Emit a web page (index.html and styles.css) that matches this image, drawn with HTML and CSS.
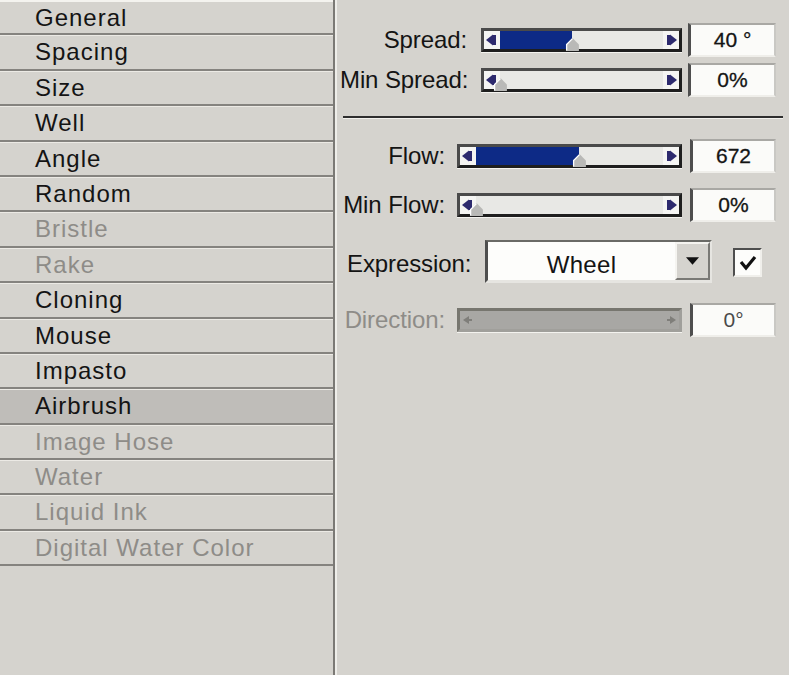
FILE: index.html
```html
<!DOCTYPE html>
<html lang="en">
<head>
    <meta charset="UTF-8">
    <title>Airbrush Settings</title>
    <link rel="stylesheet" href="styles.css">
</head>
<body>
    <div class="window">
        <ul class="categories">
            <li class="cat is-first">General</li>
            <li class="cat">Spacing</li>
            <li class="cat">Size</li>
            <li class="cat">Well</li>
            <li class="cat">Angle</li>
            <li class="cat">Random</li>
            <li class="cat is-disabled">Bristle</li>
            <li class="cat is-disabled">Rake</li>
            <li class="cat">Cloning</li>
            <li class="cat">Mouse</li>
            <li class="cat">Impasto</li>
            <li class="cat is-active">Airbrush</li>
            <li class="cat is-disabled">Image Hose</li>
            <li class="cat is-disabled">Water</li>
            <li class="cat is-disabled">Liquid Ink</li>
            <li class="cat is-disabled">Digital Water Color</li>
        </ul>

        <div class="panel">
            <!-- Spread -->
            <div class="group group-spread">
                <div class="row">
                    <span class="lbl">Spread:</span>
                    <div class="slider" style="--pos: 44%">
                        <span class="end"><svg viewBox="0 0 16 18"><path d="M2 9 L9 3.5 V14.5 Z"/><rect x="9" y="4" width="3" height="10"/></svg></span>
                        <span class="track"><span class="fill"></span><svg class="thumb" viewBox="0 0 14 14"><path d="M1 13 V7 L7 1 L13 7 V13 Z"/><path class="thumb-hi" d="M1.5 12.5 V7 L7 1.5"/></svg></span>
                        <span class="end"><svg viewBox="0 0 16 18"><rect x="4" y="4" width="3" height="10"/><path d="M7 3.5 L14 9 L7 14.5 Z"/></svg></span>
                    </div>
                    <div class="value">40 °</div>
                </div>
                <div class="row">
                    <span class="lbl">Min Spread:</span>
                    <div class="slider" style="--pos: 0%">
                        <span class="end"><svg viewBox="0 0 16 18"><path d="M2 9 L9 3.5 V14.5 Z"/><rect x="9" y="4" width="3" height="10"/></svg></span>
                        <span class="track"><span class="fill"></span><svg class="thumb" viewBox="0 0 14 14"><path d="M1 13 V7 L7 1 L13 7 V13 Z"/><path class="thumb-hi" d="M1.5 12.5 V7 L7 1.5"/></svg></span>
                        <span class="end"><svg viewBox="0 0 16 18"><rect x="4" y="4" width="3" height="10"/><path d="M7 3.5 L14 9 L7 14.5 Z"/></svg></span>
                    </div>
                    <div class="value">0%</div>
                </div>
            </div>

            <div class="divider"></div>

            <!-- Flow -->
            <div class="group group-flow">
                <div class="row">
                    <span class="lbl">Flow:</span>
                    <div class="slider" style="--pos: 55%">
                        <span class="end"><svg viewBox="0 0 16 18"><path d="M2 9 L9 3.5 V14.5 Z"/><rect x="9" y="4" width="3" height="10"/></svg></span>
                        <span class="track"><span class="fill"></span><svg class="thumb" viewBox="0 0 14 14"><path d="M1 13 V7 L7 1 L13 7 V13 Z"/><path class="thumb-hi" d="M1.5 12.5 V7 L7 1.5"/></svg></span>
                        <span class="end"><svg viewBox="0 0 16 18"><rect x="4" y="4" width="3" height="10"/><path d="M7 3.5 L14 9 L7 14.5 Z"/></svg></span>
                    </div>
                    <div class="value">672</div>
                </div>
                <div class="row">
                    <span class="lbl">Min Flow:</span>
                    <div class="slider" style="--pos: 0%">
                        <span class="end"><svg viewBox="0 0 16 18"><path d="M2 9 L9 3.5 V14.5 Z"/><rect x="9" y="4" width="3" height="10"/></svg></span>
                        <span class="track"><span class="fill"></span><svg class="thumb" viewBox="0 0 14 14"><path d="M1 13 V7 L7 1 L13 7 V13 Z"/><path class="thumb-hi" d="M1.5 12.5 V7 L7 1.5"/></svg></span>
                        <span class="end"><svg viewBox="0 0 16 18"><rect x="4" y="4" width="3" height="10"/><path d="M7 3.5 L14 9 L7 14.5 Z"/></svg></span>
                    </div>
                    <div class="value">0%</div>
                </div>
            </div>

            <!-- Expression -->
            <div class="row row-expression">
                <span class="lbl">Expression:</span>
                <div class="dropdown">
                    <span class="dropdown-text">Wheel</span>
                    <span class="dropdown-btn"><svg viewBox="0 0 12 7"><path d="M0 0 H12 L6 7 Z"/></svg></span>
                </div>
                <span class="checkbox"><svg viewBox="0 0 20 20"><path d="M3 9 L8 15 L17 4"/></svg></span>
            </div>

            <!-- Direction (disabled) -->
            <div class="group group-flow">
                <div class="row row-direction">
                    <span class="lbl">Direction:</span>
                    <div class="slider is-disabled">
                        <span class="end"><svg viewBox="0 0 16 18"><path d="M3 9 L9 5 V13 Z"/><rect x="9" y="8" width="3" height="2"/></svg></span>
                        <span class="track"></span>
                        <span class="end"><svg viewBox="0 0 16 18"><rect x="4" y="8" width="3" height="2"/><path d="M7 5 L13 9 L7 13 Z"/></svg></span>
                    </div>
                    <div class="value is-disabled">0°</div>
                </div>
            </div>
        </div>
    </div>
</body>
</html>
```

FILE: styles.css
```css
:root {
    --bg-color: #d5d3ce;
    --text-color: #141414;
    --muted-color: #8e8c88;
    --line-dark: #85837f;
    --line-light: #eceae5;
    --fill-blue: #0d2a86;
}

* {
    box-sizing: border-box;
}

body {
    margin: 0;
    background: var(--bg-color);
    color: var(--text-color);
    font-family: 'Liberation Sans', Arial, sans-serif;
}

.window {
    display: flex;
    width: 789px;
    height: 675px;
    overflow: hidden;
}

/* Category list */
.categories {
    list-style: none;
    margin: 0;
    padding: 0;
    width: 335px;
    flex-shrink: 0;
    border-right: 2px solid #7b7975;
}

.cat {
    height: 35.4px;
    padding-left: 35px;
    border-top: 1px solid var(--line-light);
    border-bottom: 2px solid var(--line-dark);
    font-size: 24px;
    letter-spacing: 1px;
    line-height: 31px;
    white-space: nowrap;
}

.cat.is-first {
    border-top: 2px solid #f4f3ef;
}

.cat.is-disabled {
    color: var(--muted-color);
}

.cat.is-active {
    background: #bfbdb9;
}

/* Settings panel */
.panel {
    flex: 1;
    border-left: 2px solid #eeede9;
    padding: 23px 6px 0 3px;
}

.row {
    display: flex;
    align-items: center;
    height: 34px;
}

.lbl {
    flex-shrink: 0;
    font-size: 24px;
    letter-spacing: -0.1px;
    text-align: right;
    white-space: nowrap;
}

.group-spread .row + .row {
    margin-top: 6px;
}

.group-spread .lbl {
    width: 127px;
    margin-right: 14px;
}

.group-spread .slider {
    width: 201px;
}

.group-spread .value {
    width: 88px;
    margin-left: 6px;
}

.divider {
    height: 3px;
    margin: 19px 0 0 3px;
    background: #2e2e2e;
    border-bottom: 1px solid #f2f1ed;
}

.group-flow {
    margin-top: 20px;
}

.group-flow .row + .row {
    margin-top: 15px;
}

.group-flow .lbl {
    width: 105px;
    margin-right: 12px;
}

.group-flow .slider {
    width: 225px;
}

.group-flow .value {
    width: 86px;
    margin-left: 8px;
}

/* Slider */
.slider {
    display: flex;
    height: 24px;
    background: #e8e8e5;
    border: 3px solid #1e1e1e;
    border-top-color: #4a4a4a;
    border-left-color: #4a4a4a;
    box-shadow: 0 1px 0 #f4f3ef;
}

.end {
    width: 16px;
    flex-shrink: 0;
    background: #f5f5f3;
}

.end svg {
    display: block;
    width: 16px;
    height: 18px;
    fill: #2d2a6e;
}

.track {
    position: relative;
    flex: 1;
}

.fill {
    display: block;
    height: 100%;
    width: var(--pos);
    background: var(--fill-blue);
}

.thumb {
    position: absolute;
    left: calc(var(--pos) - 7px);
    bottom: -3px;
    width: 15px;
    height: 15px;
    fill: #b9b9b7;
}

.thumb-hi {
    fill: none;
    stroke: #ffffff;
    stroke-width: 1.2;
}

.slider.is-disabled {
    background: #a8a7a4;
    border-color: #77766f;
    border-bottom-color: #a09f9b;
    border-right-color: #a09f9b;
}

.slider.is-disabled .end {
    background: transparent;
}

.slider.is-disabled .end svg {
    fill: #7f7e7a;
}

/* Value box */
.value {
    flex-shrink: 0;
    height: 34px;
    background: #fbfbf9;
    border-style: solid;
    border-width: 2px 2px 2px 3px;
    border-color: #a9a8a4 #c9c8c4 #efeeea #4e4e4e;
    font-size: 21px;
    line-height: 29px;
    text-align: center;
    -webkit-text-stroke: 0.3px #141414;
}

.value.is-disabled {
    color: #4a4a4a;
    -webkit-text-stroke: 0;
}

/* Expression */
.row-expression {
    align-items: flex-start;
    height: 43px;
    margin-top: 18px;
}

.row-expression .lbl {
    width: 145px;
    padding-left: 7px;
    padding-top: 10px;
    text-align: left;
}

.dropdown {
    display: flex;
    width: 227px;
    height: 43px;
    background: #fdfdfb;
    border-style: solid;
    border-width: 2px 2px 3px 3px;
    border-color: #6a6a66 #e6e5e1 #e6e5e1 #4e4e4e;
}

.dropdown-text {
    flex: 1;
    padding-top: 9px;
    font-size: 24px;
    letter-spacing: 0.3px;
    text-align: center;
}

.dropdown-btn {
    display: flex;
    align-items: center;
    justify-content: center;
    width: 35px;
    background: var(--bg-color);
    border: 2px solid #7a7975;
    border-top-color: #f5f4f0;
    border-left-color: #f5f4f0;
}

.dropdown-btn svg {
    width: 13px;
    height: 8px;
    fill: #111;
}

.checkbox {
    display: flex;
    align-items: center;
    justify-content: center;
    width: 29px;
    height: 29px;
    margin-top: 8px;
    margin-left: 21px;
    background: #fdfdfb;
    border: 2px solid #f0efeb;
    border-top-color: #4e4e4e;
    border-left-color: #4e4e4e;
}

.checkbox svg {
    width: 20px;
    height: 20px;
    fill: none;
    stroke: #111;
    stroke-width: 3.2;
}

/* Direction */
.row-direction .lbl {
    color: var(--muted-color);
}
```
